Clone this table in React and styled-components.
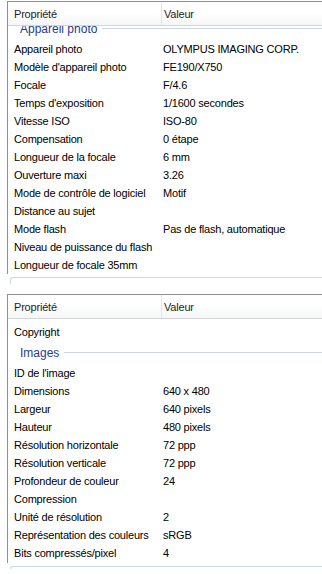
import React, { useLayoutEffect, useRef } from "react";
import styled, { createGlobalStyle } from "styled-components";

const cameraRows = [
  ["Appareil photo", "OLYMPUS IMAGING CORP."],
  ["Modèle d'appareil photo", "FE190/X750"],
  ["Focale", "F/4.6"],
  ["Temps d'exposition", "1/1600 secondes"],
  ["Vitesse ISO", "ISO-80"],
  ["Compensation", "0 étape"],
  ["Longueur de la focale", "6 mm"],
  ["Ouverture maxi", "3.26"],
  ["Mode de contrôle de logiciel", "Motif"],
  ["Distance au sujet", ""],
  ["Mode flash", "Pas de flash, automatique"],
  ["Niveau de puissance du flash", ""],
  ["Longueur de focale 35mm", ""],
];

const imageRows = [
  ["ID de l'image", ""],
  ["Dimensions", "640 x 480"],
  ["Largeur", "640 pixels"],
  ["Hauteur", "480 pixels"],
  ["Résolution horizontale", "72 ppp"],
  ["Résolution verticale", "72 ppp"],
  ["Profondeur de couleur", "24"],
  ["Compression", ""],
  ["Unité de résolution", "2"],
  ["Représentation des couleurs", "sRGB"],
  ["Bits compressés/pixel", "4"],
];

function App() {
  return (
    <>
      <GlobalStyle />
      <Page>
        <DetailsPanel
          bodyHeight={248}
          scroll={14}
          nextGroup='Photo avancée'
          stripHeight={10}
        >
          <GroupHeader title='Appareil photo' />
          {cameraRows.map(([label, value]) => (
            <PropRow key={label} label={label} value={value} />
          ))}
        </DetailsPanel>

        <DetailsPanel
          bodyHeight={244}
          scroll={0}
          nextGroup='Appareil photo'
          stripHeight={6}
        >
          <PropRow label='Copyright' value='' />
          <GroupHeader title='Images' />
          {imageRows.map(([label, value]) => (
            <PropRow key={label} label={label} value={value} />
          ))}
        </DetailsPanel>
      </Page>
    </>
  );
}

export default App;

function DetailsPanel({ bodyHeight, scroll, nextGroup, stripHeight, children }) {
  const bodyRef = useRef(null);

  // the list is scrolled a little in the first capture
  useLayoutEffect(() => {
    if (bodyRef.current) bodyRef.current.scrollTop = scroll;
  }, [scroll]);

  return (
    <div>
      <Frame>
        <Header>
          <HeaderCell divider>Propriété</HeaderCell>
          <HeaderCell>Valeur</HeaderCell>
        </Header>
        <Body ref={bodyRef} height={bodyHeight}>
          <BodyInner>{children}</BodyInner>
        </Body>
      </Frame>
      <NextStrip height={stripHeight}>
        <GroupBox>
          <GroupTitle>{nextGroup}</GroupTitle>
        </GroupBox>
      </NextStrip>
    </div>
  );
}

function GroupHeader({ title }) {
  return (
    <GroupRow>
      <GroupTitle>{title}</GroupTitle>
      <GroupLine />
    </GroupRow>
  );
}

function PropRow({ label, value }) {
  return (
    <Row>
      <LabelCell>{label}</LabelCell>
      <ValueCell>{value}</ValueCell>
    </Row>
  );
}

const GlobalStyle = createGlobalStyle`
  body {
    margin: 0;
    background: #ffffff;
    font-family: "Liberation Sans", Arial, sans-serif;
    color: #000000;
  }
`;

const Page = styled.div`
  display: flex;
  flex-direction: column;
  gap: 10px;
  padding: 1px 0 0 7px;
  width: 322px;
  height: 574px;
  box-sizing: border-box;
  overflow: hidden;
`;

const Frame = styled.div`
  border-left: 1px solid #8e9096;
  border-top: 1px solid #8e9096;
`;

const Header = styled.div`
  display: grid;
  grid-template-columns: 154px 1fr;
  height: 23px;
  background: linear-gradient(#ffffff, #ffffff 45%, #f5f6f7);
  border-bottom: 1px solid #d5d5d5;
`;

const HeaderCell = styled.div`
  display: flex;
  align-items: center;
  padding-left: ${({ divider }) => (divider ? "6px" : "2px")};
  font-size: 11px;
  letter-spacing: -0.2px;
  color: #1e1e1e;
  border-right: ${({ divider }) => (divider ? "1px solid #e2e4e8" : "none")};
`;

const Body = styled.div`
  height: ${({ height }) => `${height}px`};
  overflow: hidden;
`;

const BodyInner = styled.div`
  padding-top: 4px;
`;

const Row = styled.div`
  display: grid;
  grid-template-columns: 155px 1fr;
  height: 18px;
  align-items: center;
  font-size: 11px;
  letter-spacing: -0.2px;
  white-space: nowrap;
`;

const LabelCell = styled.div`
  padding-left: 6px;
  overflow: hidden;
`;

const ValueCell = styled.div`
  padding-left: 0;
`;

const GroupRow = styled.div`
  display: flex;
  align-items: center;
  gap: 5px;
  height: 23px;
  padding-left: 12px;
`;

const GroupTitle = styled.span`
  font-size: 12px;
  color: #1f3a93;
  white-space: nowrap;
`;

const GroupLine = styled.div`
  flex: 1;
  height: 1px;
  background: #cbd6e4;
`;

const NextStrip = styled.div`
  height: ${({ height }) => `${height}px`};
  overflow: hidden;
`;

const GroupBox = styled.div`
  margin: 3px 0 0 3px;
  height: 22px;
  display: flex;
  align-items: center;
  padding-left: 9px;
  border: 1px solid #c9d8ea;
  border-right: none;
  border-radius: 3px 0 0 3px;
`;
